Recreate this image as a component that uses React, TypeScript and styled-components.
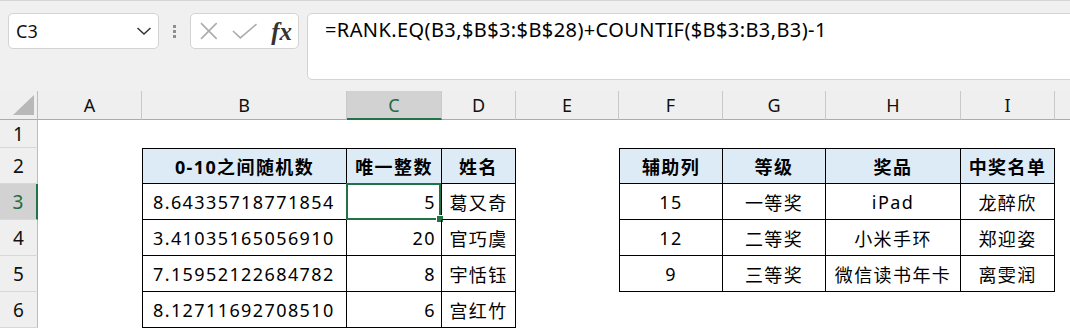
import React from 'react';
import styled, { createGlobalStyle, css } from 'styled-components';

const GlobalStyle = createGlobalStyle`
  html, body {
    margin: 0;
    padding: 0;
    background: #ffffff;
  }
  body {
    font-family: 'Noto Sans', 'Noto Sans CJK SC', sans-serif;
    color: #000;
  }
`;

const Window = styled.div`
  width: 1070px;
  height: 330px;
  overflow: hidden;
  display: flex;
  flex-direction: column;
  background: #f0f0f0;
`;

const FormulaBar = styled.div`
  flex: 0 0 91px;
  box-sizing: border-box;
  border-top: 1px solid #d6d6d6;
  display: flex;
  align-items: flex-start;
  padding: 12px 0 0 8px;
`;

const NameBox = styled.div`
  width: 151px;
  height: 36px;
  box-sizing: border-box;
  display: flex;
  align-items: center;
  justify-content: space-between;
  padding: 0 6px 0 7px;
  background: #fff;
  border: 1px solid #d3d3d3;
  border-radius: 5px;
  font-size: 18px;
  color: #111;
`;

const Grip = styled.div`
  width: 31px;
  height: 36px;
  display: flex;
  flex-direction: column;
  align-items: center;
  justify-content: center;
  gap: 2px;
  & > span {
    width: 3px;
    height: 3px;
    background: #8f8f8f;
  }
`;

const FxBox = styled.div`
  width: 109px;
  height: 36px;
  box-sizing: border-box;
  display: flex;
  align-items: center;
  gap: 14px;
  padding: 0 6px 0 9px;
  background: #fff;
  border: 1px solid #d3d3d3;
  border-radius: 5px;
`;

const FxLabel = styled.span`
  font-family: 'Liberation Serif', serif;
  font-style: italic;
  font-weight: bold;
  font-size: 25px;
  color: #333;
  line-height: 1;
  margin-left: auto;
`;

const FormulaInput = styled.div`
  margin-left: 8px;
  flex: 1;
  height: 67px;
  box-sizing: border-box;
  margin-right: -10px;
  padding: 3px 0 0 17px;
  background: #fff;
  border: 1px solid #d3d3d3;
  border-radius: 5px;
  font-size: 20px;
  line-height: 26px;
  letter-spacing: 0.4px;
  white-space: nowrap;
`;

const widths = [38, 104, 205, 95, 74, 103, 104, 103, 135, 94, 40];
const heights = [29, 28, 36, 36, 36, 36, 36, 36];

const Sheet = styled.div`
  flex: 1;
  display: grid;
  grid-template-columns: ${widths.map((w) => `${w}px`).join(' ')};
  grid-template-rows: ${heights.map((h) => `${h}px`).join(' ')};
  background: #fff;
`;

const Corner = styled.div`
  background: #efefef;
  border-right: 1px solid #bcbcbc;
  border-bottom: 1px solid #ababab;
  position: relative;
  &::after {
    content: '';
    position: absolute;
    right: 3px;
    bottom: 4px;
    width: 21px;
    height: 20px;
    background: #b8b8b8;
    clip-path: polygon(100% 0, 100% 100%, 0 100%);
  }
`;

const ColHead = styled.div<{ $active?: boolean }>`
  box-sizing: border-box;
  display: flex;
  align-items: center;
  justify-content: center;
  font-size: 18px;
  background: ${(p) => (p.$active ? '#d2d2d2' : '#efefef')};
  color: ${(p) => (p.$active ? '#1d6b40' : '#111')};
  border-right: 1px solid #c9c9c9;
  border-bottom: ${(p) => (p.$active ? '2px solid #217346' : '1px solid #ababab')};
`;

const RowHead = styled.div<{ $active?: boolean }>`
  box-sizing: border-box;
  display: flex;
  align-items: center;
  justify-content: center;
  font-size: 19px;
  background: ${(p) => (p.$active ? '#d2d2d2' : '#efefef')};
  color: ${(p) => (p.$active ? '#1d6b40' : '#111')};
  border-right: ${(p) => (p.$active ? '2px solid #217346' : '1px solid #bcbcbc')};
  border-bottom: 1px solid #d8d8d8;
`;

type Align = 'left' | 'center' | 'right';

const Cell = styled.div<{
  $boxed?: boolean;
  $left?: boolean;
  $top?: boolean;
  $head?: boolean;
  $align?: Align;
}>`
  box-sizing: border-box;
  position: relative;
  display: flex;
  align-items: center;
  white-space: nowrap;
  font-size: 18px;
  letter-spacing: 1.4px;
  padding: 0 5px 0 10px;
  justify-content: ${(p) =>
    p.$align === 'right' ? 'flex-end' : p.$align === 'center' ? 'center' : 'flex-start'};
  ${(p) =>
    p.$align === 'center' &&
    css`
      padding: 0 2px;
    `}
  ${(p) =>
    p.$boxed &&
    css`
      border-right: 1px solid #000;
      border-bottom: 1px solid #000;
    `}
  ${(p) =>
    p.$left &&
    css`
      border-left: 1px solid #000;
    `}
  ${(p) =>
    p.$top &&
    css`
      border-top: 1px solid #000;
    `}
  ${(p) =>
    p.$head &&
    css`
      background: #ddebf7;
      font-weight: bold;
    `}
`;

const Selection = styled.div`
  position: absolute;
  left: -1px;
  top: -1px;
  right: 0;
  bottom: -1px;
  border: 2px solid #217346;
  pointer-events: none;
  &::after {
    content: '';
    position: absolute;
    right: -5px;
    bottom: -5px;
    width: 6px;
    height: 6px;
    background: #217346;
    border: 1px solid #fff;
  }
`;

type CellDef = { text: string; align?: Align; head?: boolean };

const cols = ['A', 'B', 'C', 'D', 'E', 'F', 'G', 'H', 'I', 'J'];

const leftTable: Record<string, CellDef> = {
  B2: { text: '0-10之间随机数', align: 'center', head: true },
  C2: { text: '唯一整数', align: 'center', head: true },
  D2: { text: '姓名', align: 'center', head: true },
  B3: { text: '8.64335718771854' },
  C3: { text: '5', align: 'right' },
  D3: { text: '葛又奇', align: 'center' },
  B4: { text: '3.41035165056910' },
  C4: { text: '20', align: 'right' },
  D4: { text: '官巧虞', align: 'center' },
  B5: { text: '7.15952122684782' },
  C5: { text: '8', align: 'right' },
  D5: { text: '宇恬钰', align: 'center' },
  B6: { text: '8.12711692708510' },
  C6: { text: '6', align: 'right' },
  D6: { text: '宫红竹', align: 'center' },
};

const prizeRows = [
  ['辅助列', '等级', '奖品', '中奖名单'],
  ['15', '一等奖', 'iPad', '龙醉欣'],
  ['12', '二等奖', '小米手环', '郑迎姿'],
  ['9', '三等奖', '微信读书年卡', '离雯润'],
];

const rightTable: Record<string, CellDef> = {};
prizeRows.forEach((row, i) =>
  row.forEach((text, j) => {
    rightTable[`${cols[5 + j]}${i + 2}`] = { text, align: 'center', head: i === 0 };
  })
);

const cellAt = (key: string) => leftTable[key] || rightTable[key];

const Chevron = () => (
  <svg width="16" height="10" viewBox="0 0 16 10">
    <path d="M1.5 2 L8 8 L14.5 2" fill="none" stroke="#333" strokeWidth="1.5" />
  </svg>
);

const Cross = () => (
  <svg width="18" height="18" viewBox="0 0 18 18">
    <path d="M1 1 L17 17 M17 1 L1 17" stroke="#ababab" strokeWidth="1.6" />
  </svg>
);

const Tick = () => (
  <svg width="26" height="16" viewBox="0 0 26 16">
    <path d="M1 8 L8.5 15 L25 1" fill="none" stroke="#ababab" strokeWidth="1.6" />
  </svg>
);

const App: React.FC = () => {
  const rows = [1, 2, 3, 4, 5, 6];

  return (
    <Window>
      <GlobalStyle />
      <FormulaBar>
        <NameBox>
          <span>C3</span>
          <Chevron />
        </NameBox>
        <Grip>
          <span />
          <span />
          <span />
        </Grip>
        <FxBox>
          <Cross />
          <Tick />
          <FxLabel>fx</FxLabel>
        </FxBox>
        <FormulaInput>=RANK.EQ(B3,$B$3:$B$28)+COUNTIF($B$3:B3,B3)-1</FormulaInput>
      </FormulaBar>
      <Sheet>
        <Corner />
        {cols.map((c) => (
          <ColHead key={c} $active={c === 'C'}>
            {c === 'J' ? '' : c}
          </ColHead>
        ))}
        {rows.map((r) => (
          <React.Fragment key={r}>
            <RowHead $active={r === 3}>{r}</RowHead>
            {cols.map((c, ci) => {
              const def = cellAt(`${c}${r}`);
              if (!def) return <Cell key={c} />;
              const firstCol = ci === 1 || ci === 5;
              return (
                <Cell
                  key={c}
                  $boxed
                  $left={firstCol}
                  $top={r === 2}
                  $head={def.head}
                  $align={def.align}
                >
                  {def.text}
                  {c === 'C' && r === 3 && <Selection />}
                </Cell>
              );
            })}
          </React.Fragment>
        ))}
      </Sheet>
    </Window>
  );
};

export default App;
